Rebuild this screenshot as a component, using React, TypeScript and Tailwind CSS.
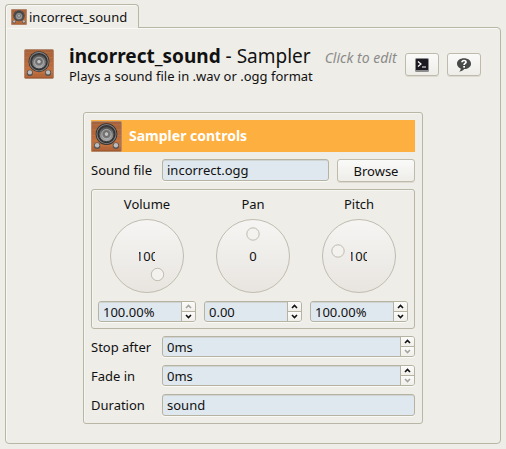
import { useState } from "react";
import type { ReactNode } from "react";

const field =
  "w-full min-w-0 rounded-[3px] border border-[#b7b3a3] bg-[#e0e8ef] px-1 text-[#111] shadow-[inset_0_1px_0_#cfd3d1,0_1px_0_#f9f9f6] outline-none";
const button =
  "flex items-center justify-center rounded-[3px] border border-[#bfbbac] bg-linear-to-b from-[#fafaf9] to-[#eeede8] shadow-[0_1px_0_#dddbd1]";

function Speaker({ className }: { className: string }) {
  return (
    <svg viewBox="0 0 32 32" className={className} aria-hidden="true">
      <defs>
        <linearGradient id="wood" x1="0" y1="0" x2="0" y2="1">
          <stop offset="0" stopColor="#a4623c" />
          <stop offset="0.45" stopColor="#b8683a" />
          <stop offset="0.8" stopColor="#c2713f" />
          <stop offset="1" stopColor="#a0552d" />
        </linearGradient>
        <linearGradient id="metal" x1="0" y1="0" x2="0" y2="1">
          <stop offset="0" stopColor="#4c4c4c" />
          <stop offset="1" stopColor="#b0b0b0" />
        </linearGradient>
      </defs>
      <rect x="0.5" y="0.5" width="31" height="31" rx="1.5" fill="url(#wood)" stroke="#b08a70" />
      <path d="M1 4h30M1 9h30M1 15h30M1 20h30M1 29h30" stroke="#d08a58" strokeWidth="0.6" opacity="0.5" />
      <circle cx="16" cy="13.5" r="11.2" fill="#303030" />
      <circle cx="16" cy="13.5" r="9.9" fill="none" stroke="#7d7d7d" strokeWidth="1.1" />
      <circle cx="16" cy="13.5" r="7.8" fill="url(#metal)" stroke="#3a3a3a" />
      <circle cx="16" cy="13.5" r="4.8" fill="#777" stroke="#c4c4c4" strokeWidth="0.7" />
      <circle cx="16" cy="13.5" r="2.4" fill="#c4c4c4" stroke="#505050" strokeWidth="0.7" />
      <circle cx="6.3" cy="25.5" r="3.3" fill="#555" />
      <circle cx="6.3" cy="25" r="2.3" fill="#bdbdbd" />
      <circle cx="25.7" cy="25.5" r="3.3" fill="#555" />
      <circle cx="25.7" cy="25" r="2.3" fill="#bdbdbd" />
    </svg>
  );
}

function Arrow({ down = false, dim = false }: { down?: boolean; dim?: boolean }) {
  return (
    <svg viewBox="0 0 7 5" className="h-[5px] w-[7px]" aria-hidden="true">
      <path
        d={down ? "M1 1L3.5 3.5L6 1" : "M1 4L3.5 1.5L6 4"}
        fill="none"
        stroke={dim ? "#a5a39d" : "#111"}
        strokeWidth="1.6"
      />
    </svg>
  );
}

type SpinProps = { id?: string; label?: string; value: string; upDim?: boolean; downDim?: boolean };

function SpinBox({ id, label, value, upDim, downDim }: SpinProps) {
  const step = "flex flex-1 items-center justify-center bg-linear-to-b from-[#fbfbfa] to-[#f0efeb]";
  return (
    <div className="flex h-[21px] w-full overflow-hidden rounded-[3px] border border-[#b7b3a3] bg-[#e0e8ef] shadow-[0_1px_0_#f9f9f6]">
      <input
        id={id}
        aria-label={label}
        defaultValue={value}
        className="w-full min-w-0 flex-1 bg-transparent px-1 text-[#111] shadow-[inset_0_1px_0_#cfd3d1] outline-none"
      />
      <div className="flex w-[14px] shrink-0 flex-col border-l border-[#b7b3a3]">
        <button aria-label="Increase" disabled={upDim} className={step}>
          <Arrow dim={upDim} />
        </button>
        <div className="h-px bg-[#b7b3a3]" />
        <button aria-label="Decrease" disabled={downDim} className={step}>
          <Arrow down dim={downDim} />
        </button>
      </div>
    </div>
  );
}

type DialProps = {
  name: string;
  text: string;
  value: string;
  min: number;
  max: number;
  start: number;
  knob: [number, number];
  upDim?: boolean;
};

function Dial({ name, text, value, min, max, start, knob, upDim }: DialProps) {
  const id = name.toLowerCase();
  return (
    <div className="flex min-w-0 flex-col items-center">
      <label htmlFor={id} className="leading-5">
        {name}
      </label>
      <div className="relative mt-1 mb-[7px] flex size-[76px] items-center justify-center">
        <svg viewBox="0 0 76 76" className="absolute inset-0 size-full" aria-hidden="true">
          <defs>
            <linearGradient id={`${id}-face`} x1="0" y1="0" x2="0" y2="1">
              <stop offset="0" stopColor="#f6f5f3" />
              <stop offset="1" stopColor="#e8e5e0" />
            </linearGradient>
          </defs>
          <circle cx="38" cy="38" r="36.5" fill={`url(#${id}-face)`} stroke="#c0bcae" />
          <circle cx={knob[0]} cy={knob[1]} r="6.2" fill="#f3f2ef" stroke="#bfbbae" />
        </svg>
        <span className="relative flex w-4 justify-center overflow-hidden">
          <span>{text}</span>
        </span>
        <input
          id={id}
          type="range"
          min={min}
          max={max}
          defaultValue={start}
          className="absolute inset-0 size-full cursor-pointer opacity-0"
        />
      </div>
      <SpinBox label={`${name} value`} value={value} upDim={upDim} />
    </div>
  );
}

function Row({ id, label, children }: { id: string; label: string; children: ReactNode }) {
  return (
    <div className="grid min-h-[22px] grid-cols-[63px_1fr] items-start gap-2">
      <label htmlFor={id} className="leading-[22px] whitespace-nowrap">
        {label}
      </label>
      {children}
    </div>
  );
}

export default function App() {
  const [file, setFile] = useState("incorrect.ogg");
  return (
    <div className="min-h-screen bg-[#eeede8] px-[5px] pt-1 pb-1 font-['Noto_Sans','Open_Sans',sans-serif] text-[13px] leading-5 text-[#111]">
      <div role="tablist" className="flex">
        <button
          role="tab"
          aria-selected="true"
          className="relative -mb-px flex h-6 items-center gap-[2px] rounded-t-[4px] border border-b-0 border-[#bab6a6] bg-[#eeede8] pr-[11px] pl-[5px] shadow-[inset_1px_1px_0_#f8f8f5]"
        >
          <Speaker className="size-4" />
          <span>incorrect_sound</span>
        </button>
      </div>
      <main className="rounded-[4px] rounded-tl-none border border-[#bab6a6] px-[18px] pt-[17px] pb-[19px] shadow-[inset_1px_1px_0_#f8f8f5]">
        <header className="flex items-start">
          <Speaker className="mt-1 size-[30px] shrink-0" />
          <div className="ml-[15px] min-w-0">
            <div className="flex items-baseline gap-[14px] whitespace-nowrap">
              <h1 className="text-[19px] leading-[23px]">
                <strong>incorrect_sound</strong> - Sampler
              </h1>
              <button className="text-[14px] leading-5 text-[#8b8b89] italic">Click to edit</button>
            </div>
            <p className="leading-4">Plays a sound file in .wav or .ogg format</p>
          </div>
          <div className="mt-2 mr-px ml-auto flex shrink-0 gap-2">
            <button aria-label="Edit script" className={`${button} h-[23px] w-[34px]`}>
              <svg viewBox="0 0 16 16" className="size-4" aria-hidden="true">
                <rect x="1" y="1" width="14" height="14" rx="1.5" fill="#8c8c8c" />
                <rect x="2" y="2" width="12" height="11" rx="0.5" fill="#1c1922" />
                <path d="M4 4.5L7 7L4 9.5M8 10H12" fill="none" stroke="#fff" strokeWidth="1.2" />
              </svg>
            </button>
            <button aria-label="Help" className={`${button} h-[23px] w-[34px]`}>
              <svg viewBox="0 0 16 16" className="size-4" aria-hidden="true">
                <path
                  d="M8 1.3C12 1.3 15 3.5 15 6.7S12 12 8.2 12C7 13.7 5.3 14.5 3 14.4C4.3 13.6 4.7 12.7 4.7 11.4C2.4 10.6 1 8.9 1 6.7C1 3.5 4 1.3 8 1.3Z"
                  fill="#484a48"
                />
                <path d="M6 5.2C6.1 2.9 10.1 3 10 5.1C9.9 6.5 8.1 6.4 8.1 8" fill="none" stroke="#fff" strokeWidth="1.7" />
                <rect x="7.2" y="9" width="1.8" height="1.6" fill="#fff" />
              </svg>
            </button>
          </div>
        </header>

        <section className="mx-auto mt-7 flex w-[340px] max-w-full flex-col gap-[7px] rounded-[3px] border border-[#bab6a6] p-[7px] shadow-[inset_1px_1px_0_#f5f5f1]">
          <div className="flex h-8 items-center gap-[7px] bg-[#fdaf40]">
            <Speaker className="size-[31px]" />
            <h2 className="text-[14px] font-bold text-white">Sampler controls</h2>
          </div>
          <Row id="file" label="Sound file">
            <div className="flex min-w-0 items-start gap-2">
              <input
                id="file"
                value={file}
                onChange={(e) => setFile(e.target.value)}
                className={`${field} h-[22px]`}
              />
              <button className={`${button} h-[23px] w-[78px] shrink-0`}>Browse</button>
            </div>
          </Row>
          <div className="grid grid-cols-3 gap-2 rounded-[3px] border border-[#bab6a6] px-[6px] pt-1 pb-[6px] shadow-[inset_1px_1px_0_#f5f5f1]">
            <Dial name="Volume" text="100" value="100.00%" min={0} max={100} start={100} knob={[48.5, 56.5]} upDim />
            <Dial name="Pan" text="0" value="0.00" min={-20} max={20} start={0} knob={[38, 16]} />
            <Dial name="Pitch" text="100" value="100.00%" min={0} max={500} start={100} knob={[17, 33]} />
          </div>
          <Row id="stop" label="Stop after">
            <SpinBox id="stop" value="0ms" downDim />
          </Row>
          <Row id="fade" label="Fade in">
            <SpinBox id="fade" value="0ms" downDim />
          </Row>
          <Row id="duration" label="Duration">
            <input id="duration" defaultValue="sound" className={`${field} h-[22px]`} />
          </Row>
        </section>
      </main>
    </div>
  );
}
